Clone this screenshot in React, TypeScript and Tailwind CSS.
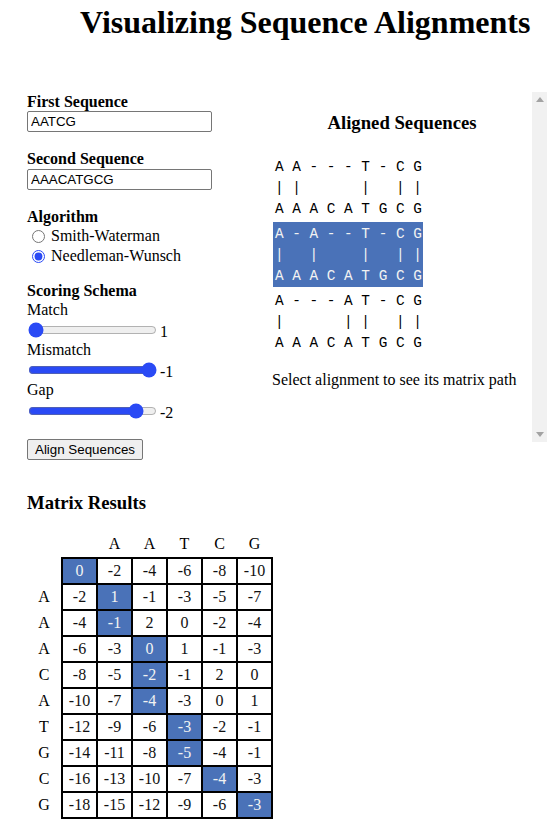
import React from "react";

const matrix: number[][] = [
  [0, -2, -4, -6, -8, -10],
  [-2, 1, -1, -3, -5, -7],
  [-4, -1, 2, 0, -2, -4],
  [-6, -3, 0, 1, -1, -3],
  [-8, -5, -2, -1, 2, 0],
  [-10, -7, -4, -3, 0, 1],
  [-12, -9, -6, -3, -2, -1],
  [-14, -11, -8, -5, -4, -1],
  [-16, -13, -10, -7, -4, -3],
  [-18, -15, -12, -9, -6, -3],
];

const rowLabels = ["", "A", "A", "A", "C", "A", "T", "G", "C", "G"];
const colLabels = ["A", "A", "T", "C", "G"];
// path through the matrix for the selected alignment
const path: [number, number][] = [
  [0, 0], [1, 1], [2, 1], [3, 2], [4, 2], [5, 2], [6, 3], [7, 3], [8, 4], [9, 5],
];

const second = "AAACATGCG".split("");
const alignments = [
  { top: "AA---T-CG", selected: false },
  { top: "A-A--T-CG", selected: true },
  { top: "A---AT-CG", selected: false },
];

function AlignmentBlock({ top, selected }: { top: string; selected: boolean }) {
  const a = top.split("");
  const bars = a.map((c, i) => (c === second[i] ? "|" : " "));
  return (
    <div
      className={`h-[65px] w-[150px] pt-[2px] pl-[2px] font-['Liberation_Mono',monospace] text-[14.4px] leading-[21px] whitespace-pre ${
        selected ? "bg-[#4a72b8] text-[#f2f2f2]" : "text-black"
      }`}
    >
      <div>{a.join(" ")}</div>
      <div>{bars.join(" ")}</div>
      <div>{second.join(" ")}</div>
    </div>
  );
}

function Slider({ min, max, value }: { min: number; max: number; value: number }) {
  return (
    <div className="flex h-[22px] items-center">
      <input
        type="range"
        min={min}
        max={max}
        defaultValue={value}
        className="m-0 ml-[1px] h-[16px] w-[129px] accent-[#2a4af5]"
      />
      <span className="ml-[3px] mt-[4px]">{value}</span>
    </div>
  );
}

function ScrollTrack() {
  return (
    <div className="flex w-[15px] shrink-0 flex-col items-center justify-between bg-[#f1f1f1] py-[5px]">
      <svg width="8" height="5" viewBox="0 0 8 5">
        <path d="M0 5 L4 0 L8 5 Z" fill="#a3a3a3" />
      </svg>
      <svg width="8" height="5" viewBox="0 0 8 5">
        <path d="M0 0 L4 5 L8 0 Z" fill="#a3a3a3" />
      </svg>
    </div>
  );
}

export default function App() {
  const onPath = (r: number, c: number) => path.some(([pr, pc]) => pr === r && pc === c);

  return (
    <div className="font-['Liberation_Serif',serif] text-[16px] leading-[18.4px] text-black">
      <h1 className="pl-[80px] pt-[4px] text-[32px] font-bold leading-[37px]">
        Visualizing Sequence Alignments
      </h1>

      <div className="mt-[52px] flex">
        {/* Form */}
        <div className="w-[272px] shrink-0 pl-[27px]">
          <div className="font-bold">First Sequence</div>
          <input
            defaultValue="AATCG"
            className="block h-[21px] w-[185px] rounded-[2px] border border-[#767676] px-[3px] font-['Liberation_Sans',sans-serif] text-[13.33px]"
          />
          <div className="mt-[18px] font-bold">Second Sequence</div>
          <input
            defaultValue="AAACATGCG"
            className="block h-[21px] w-[185px] rounded-[2px] border border-[#767676] px-[3px] font-['Liberation_Sans',sans-serif] text-[13.33px]"
          />

          <div className="mt-[18px] font-bold">Algorithm</div>
          <label className="flex h-[20px] items-center">
            <input type="radio" name="algo" className="ml-[5px] mr-[6px] h-[13px] w-[13px] accent-[#2a4af5]" />
            Smith-Waterman
          </label>
          <label className="flex h-[20px] items-center">
            <input
              type="radio"
              name="algo"
              defaultChecked
              className="ml-[5px] mr-[6px] h-[13px] w-[13px] accent-[#2a4af5]"
            />
            Needleman-Wunsch
          </label>

          <div className="mt-[16px] font-bold">Scoring Schema</div>
          <div>Match</div>
          <Slider min={1} max={5} value={1} />
          <div>Mismatch</div>
          <Slider min={-5} max={-1} value={-1} />
          <div>Gap</div>
          <Slider min={-10} max={-1} value={-2} />

          <button className="mt-[17px] h-[21px] rounded-[2px] border border-[#767676] bg-[#efefef] px-[7px] font-['Liberation_Sans',sans-serif] text-[13.33px] leading-[15px]">
            Align Sequences
          </button>
        </div>

        {/* Aligned sequences pane */}
        <div className="-mt-[1px] flex h-[350px] w-[275px] shrink-0 overflow-hidden">
          <div className="w-[260px] shrink-0">
            <h3 className="mb-[18.7px] mt-[20px] text-center text-[18.72px] font-bold leading-[21.5px]">
              Aligned Sequences
            </h3>
            <div className="flex flex-col gap-[1.7px] pl-[1px] pt-[3px]">
              {alignments.map((al, i) => (
                <AlignmentBlock key={i} top={al.top} selected={al.selected} />
              ))}
            </div>
            <p className="mt-[17px]">Select alignment to see its matrix path</p>
          </div>
          <ScrollTrack />
        </div>
      </div>

      {/* Matrix */}
      <div className="pl-[27px]">
        <h3 className="mt-[32px] text-[18.72px] font-bold leading-[21.5px]">Matrix Results</h3>
        <table className="mt-[18.5px] border-collapse text-center">
          <thead>
            <tr className="h-[26px]">
              <th className="w-[35px] p-0 font-normal"></th>
              <th className="w-[35px] p-0 font-normal"></th>
              {colLabels.map((l, i) => (
                <th key={i} className="w-[35px] p-0 font-normal">
                  {l}
                </th>
              ))}
            </tr>
          </thead>
          <tbody>
            {matrix.map((row, r) => (
              <tr key={r} className="h-[26px]">
                <td className="w-[35px] p-0">{rowLabels[r]}</td>
                {row.map((v, c) => (
                  <td
                    key={c}
                    className={`w-[35px] border-2 border-black p-0 ${
                      onPath(r, c) ? "bg-[#4a72b8] text-[#f2f2f2]" : "text-[#111]"
                    }`}
                  >
                    {v}
                  </td>
                ))}
              </tr>
            ))}
          </tbody>
        </table>
      </div>
    </div>
  );
}
